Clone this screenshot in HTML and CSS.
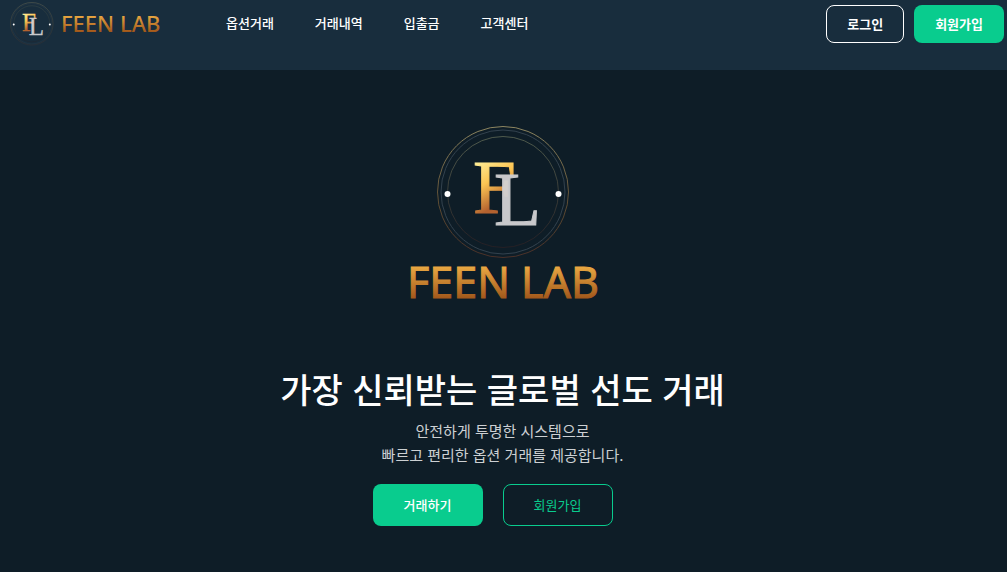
FILE: index.html
```html
<!DOCTYPE html>
<html lang="ko">
<head>
  <meta charset="UTF-8">
  <meta name="viewport" content="width=device-width, initial-scale=1.0">
  <title>FEEN LAB</title>
  <link rel="stylesheet" href="styles.css">
</head>
<body>
  <header class="header">
    <a class="brand" href="#" aria-label="FEEN LAB">
      <svg class="brand-logo" viewBox="0 0 160 48" width="160" height="48">
        <g transform="translate(2 2) scale(0.325)">
          <use href="#mark"></use>
        </g>
        <text class="brand-text" x="53" y="32" fill="url(#copper)">FEEN LAB</text>
      </svg>
    </a>

    <nav class="nav">
      <a href="#">옵션거래</a>
      <a href="#">거래내역</a>
      <a href="#">입출금</a>
      <a href="#">고객센터</a>
    </nav>

    <div class="header-buttons">
      <button class="btn-login" type="button">로그인</button>
      <button class="btn-join" type="button">회원가입</button>
    </div>
  </header>

  <main class="hero">
    <svg class="hero-logo" viewBox="0 0 200 190" width="200" height="190" role="img" aria-label="FEEN LAB">
      <defs>
        <linearGradient id="gold" x1="0" y1="0" x2="0.3" y2="1">
          <stop offset="0.2" stop-color="#fff09a"></stop>
          <stop offset="0.5" stop-color="#fcc553"></stop>
          <stop offset="0.8" stop-color="#b4622f"></stop>
        </linearGradient>
        <linearGradient id="copper" x1="0" y1="0" x2="0" y2="1">
          <stop offset="0.25" stop-color="#e9a842"></stop>
          <stop offset="0.8" stop-color="#a0561a"></stop>
        </linearGradient>
        <linearGradient id="ring" x1="0" y1="0" x2="0" y2="1">
          <stop offset="0" stop-color="#8c8560"></stop>
          <stop offset="0.6" stop-color="#5c4b32"></stop>
          <stop offset="1" stop-color="#4a3028"></stop>
        </linearGradient>
        <linearGradient id="ring-inner" x1="0" y1="0" x2="0" y2="1">
          <stop offset="0" stop-color="#4f5a4c"></stop>
          <stop offset="1" stop-color="#241f24"></stop>
        </linearGradient>
        <g id="mark">
          <circle cx="67" cy="67" r="65.5" fill="none" stroke="url(#ring)"></circle>
          <circle cx="67" cy="67" r="62" fill="none" stroke="#33424e"></circle>
          <circle cx="67" cy="67" r="55.5" fill="none" stroke="url(#ring-inner)"></circle>
          <circle cx="11.5" cy="69" r="3" fill="#fff"></circle>
          <circle cx="122.5" cy="69" r="3" fill="#fff"></circle>
          <text class="mark-letter" x="37" y="88" fill="url(#gold)" stroke="url(#gold)">F</text>
          <text class="mark-letter" x="58" y="100" fill="#d2d2d4" stroke="#d2d2d4" opacity="0.95">L</text>
        </g>
      </defs>
      <use href="#mark" x="33"></use>
      <text class="hero-logo-text" x="100" y="173" text-anchor="middle" fill="url(#copper)" stroke="url(#copper)">FEEN LAB</text>
    </svg>

    <h1>가장 신뢰받는 글로벌 선도 거래</h1>
    <p>안전하게 투명한 시스템으로<br>빠르고 편리한 옵션 거래를 제공합니다.</p>

    <div class="hero-buttons">
      <button class="btn-trade" type="button">거래하기</button>
      <button class="btn-signup" type="button">회원가입</button>
    </div>
  </main>
</body>
</html>
```
FILE: styles.css
```css
:root {
  --background: #0e1d27;
  --header: #182d3d;
  --green: #09cc8e;
  --white: #fff;
  --text: #ccd0d3;
}

* {
  box-sizing: border-box;
}

body {
  font-family: 'Noto Sans CJK KR', sans-serif;
  margin: 0;
  min-height: 100vh;
  background: var(--background);
  color: var(--white);
}

a {
  color: inherit;
  text-decoration: none;
}

button {
  border: 1px solid transparent;
  border-radius: 8px;
  padding: 0 20px 2px;
  font-family: inherit;
  font-size: 13px;
  color: var(--white);
  background: transparent;
  cursor: pointer;
}

.header {
  display: flex;
  align-items: flex-start;
  height: 70px;
  padding-left: 8px;
  padding-right: 3px;
  background: var(--header);
}

.brand-logo,
.hero-logo {
  display: block;
}

.brand-text {
  font-family: 'Noto Sans', sans-serif;
  font-size: 22px;
  font-weight: 500;
}

.mark-letter {
  font-family: 'Liberation Serif', serif;
  font-size: 77px;
}

.nav {
  display: flex;
  gap: 41px;
  margin-left: 58px;
  padding-top: 13px;
  font-size: 13px;
  font-weight: 500;
  line-height: 20px;
}

.header-buttons {
  display: flex;
  gap: 10px;
  margin-left: auto;
  padding-top: 5px;
}

.header-buttons button {
  height: 38px;
  font-weight: 700;
}

.btn-login {
  border-color: var(--white);
}

.btn-join,
.btn-trade {
  background: var(--green);
}

.hero {
  display: flex;
  flex-direction: column;
  align-items: center;
  padding: 55px 22px 46px 20px;
  text-align: center;
}

.hero-logo-text {
  font-family: 'Noto Sans', sans-serif;
  font-size: 43px;
}

h1 {
  margin: 49px 0 0;
  font-size: 34px;
  font-weight: 500;
  line-height: 50px;
}

p {
  margin: 5px 0 0;
  font-size: 15px;
  line-height: 24px;
  color: var(--text);
}

.hero-buttons {
  display: flex;
  gap: 20px;
  margin: 17px 20px 0 0;
}

.hero-buttons button {
  width: 110px;
  height: 42px;
}

.btn-trade {
  font-weight: 500;
}

.hero-buttons .btn-signup {
  border-color: var(--green);
  color: var(--green);
}
```
